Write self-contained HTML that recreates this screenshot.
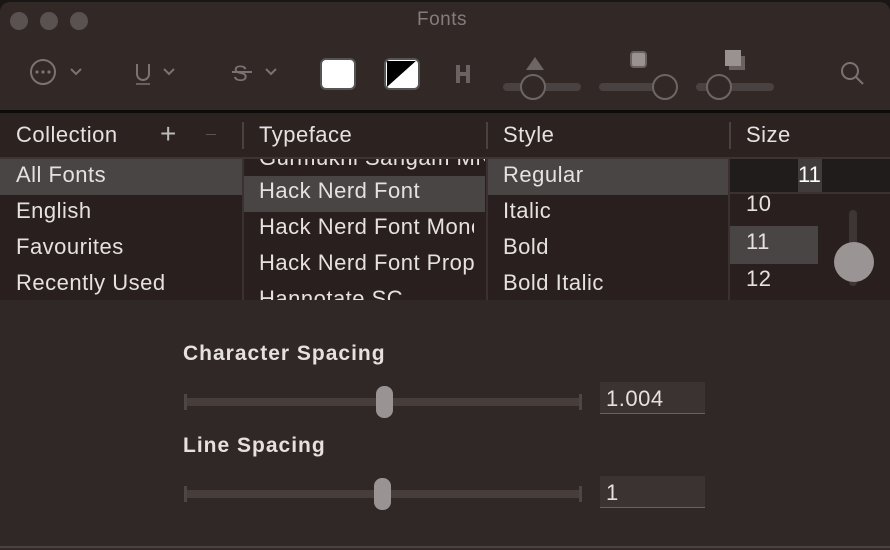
<!DOCTYPE html><html><head><style>
*{margin:0;padding:0;box-sizing:border-box}
body{width:890px;height:550px;background:#1a1616;font-family:"Liberation Sans",sans-serif;overflow:hidden;position:relative;color:#e6e1e0}
.a{position:absolute}
.t{font-size:22px;letter-spacing:0.5px;white-space:nowrap}
.b{font-weight:bold;font-size:21px;letter-spacing:1px}
</style></head><body>
<div class="a" style="left:0;top:2px;width:890px;height:548px;background:#322927;border-radius:10px 10px 0 0;overflow:hidden">
<div class="a" style="left:10px;top:10px;width:18px;height:18px;border-radius:50%;background:#5a5250"></div>
<div class="a" style="left:40px;top:10px;width:18px;height:18px;border-radius:50%;background:#5a5250"></div>
<div class="a" style="left:70px;top:10px;width:18px;height:18px;border-radius:50%;background:#5a5250"></div>
<div class="a t" style="left:417px;top:7px;color:#857d7b;font-size:19px">Fonts</div>
<svg class="a" style="left:0;top:0" width="890" height="110">
<g stroke="#7b7371" fill="none" stroke-width="2">
<circle cx="43" cy="70" r="12"/><path d="M71 67l5 5 5-5M164 67l5 5 5-5M266 67l5 5 5-5"/>
<path d="M137 62v10a6 6 0 0012 0v-10"/><path d="M136 82h14" stroke-width="1.5"/>
<path d="M232 70h20"/>
</g>
<g fill="#7b7371"><circle cx="37" cy="70" r="1.6"/><circle cx="43" cy="70" r="1.6"/><circle cx="49" cy="70" r="1.6"/></g>
<text x="233" y="79" font-size="22" fill="#7b7371" font-family="Liberation Sans">S</text>
<rect x="321" y="57" width="34" height="30" rx="5" fill="#fff" stroke="#555" stroke-width="2"/>
<rect x="385" y="57" width="34" height="30" rx="5" fill="#fff" stroke="#555" stroke-width="2"/>
<path d="M387 59h29L387 85z" fill="#000"/><path d="M416 59v26H387z" fill="#fff"/>
<g fill="#6b6361"><rect x="456" y="63" width="4" height="18"/><rect x="466" y="63" width="4" height="18"/><rect x="456" y="70" width="14" height="4"/></g>
<g stroke="#4a4240" stroke-width="8" stroke-linecap="round"><path d="M507 85h70M603 85h70M700 85h70"/></g>
<g stroke="#6e6664" stroke-width="2" fill="#322927"><circle cx="533" cy="85" r="12"/><circle cx="665" cy="85" r="12"/><circle cx="719" cy="85" r="12"/></g>
<path d="M535 55l9 13h-18z" fill="#6e6664"/>
<rect x="631" y="50" width="15" height="15" rx="3" fill="#9a9291" stroke="#6a6260" stroke-width="2"/>
<rect x="729" y="54" width="16" height="14" fill="#6a6260"/><rect x="725" y="48" width="16" height="16" fill="#9a9291"/>
<circle cx="850" cy="69" r="8" stroke="#7b7371" stroke-width="2" fill="none"/><path d="M856 75l7 7" stroke="#7b7371" stroke-width="2"/>
</svg>
<div class="a" style="left:0;top:108px;width:890px;height:3px;background:#0e0b0b"></div>
<div class="a" style="left:0;top:111px;width:890px;height:45px;background:#2c2321"></div>
<div class="a t" style="left:16px;top:120px">Collection</div>
<div class="a t" style="left:160px;top:116px;font-size:28px;color:#bbb;font-weight:300">+</div>
<div class="a" style="left:206px;top:132px;width:10px;height:1px;background:#555"></div>
<div class="a t" style="left:259px;top:120px">Typeface</div>
<div class="a t" style="left:503px;top:120px">Style</div>
<div class="a t" style="left:746px;top:120px">Size</div>
<div class="a" style="left:242px;top:120px;width:2px;height:27px;background:#4a4240"></div>
<div class="a" style="left:486px;top:120px;width:2px;height:27px;background:#4a4240"></div>
<div class="a" style="left:729px;top:120px;width:2px;height:27px;background:#4a4240"></div>
<div class="a" style="left:0;top:155px;width:890px;height:2px;background:#3e3533"></div>
<div class="a" style="left:0;top:157px;width:890px;height:143px;background:#281f1e"></div>
<div class="a" style="left:0;top:157px;width:242px;height:36px;background:#484544"></div>
<div class="a" style="left:242px;top:157px;width:2px;height:143px;background:#3a3130"></div>
<div class="a" style="left:486px;top:157px;width:2px;height:143px;background:#3a3130"></div>
<div class="a" style="left:728px;top:157px;width:2px;height:143px;background:#3a3130"></div>
<div class="a t" style="left:16px;top:160px">All Fonts</div>
<div class="a t" style="left:16px;top:196px">English</div>
<div class="a t" style="left:16px;top:232px">Favourites</div>
<div class="a t" style="left:16px;top:268px">Recently Used</div>
<div class="a" style="left:244px;top:157px;width:241px;height:143px;overflow:hidden">
<div class="a t" style="left:15px;top:-14px">Gurmukhi Sangam MN</div>
<div class="a" style="left:0;top:17px;width:241px;height:36px;background:#484544"></div>
<div class="a t" style="left:15px;top:19px">Hack Nerd Font</div>
<div class="a t" style="left:15px;top:55px;width:215px;overflow:hidden">Hack Nerd Font Mono</div>
<div class="a t" style="left:15px;top:91px;width:215px;overflow:hidden">Hack Nerd Font Propo</div>
<div class="a t" style="left:15px;top:127px">Hannotate SC</div>
</div>
<div class="a" style="left:488px;top:157px;width:240px;height:36px;background:#484544"></div>
<div class="a t" style="left:503px;top:160px">Regular</div>
<div class="a t" style="left:503px;top:196px">Italic</div>
<div class="a t" style="left:503px;top:232px">Bold</div>
<div class="a t" style="left:503px;top:268px">Bold Italic</div>
<div class="a" style="left:730px;top:157px;width:160px;height:33px;background:#1f1c1b"></div>
<div class="a" style="left:798px;top:157px;width:24px;height:33px;background:#3f3c3b"></div>
<div class="a t" style="left:798px;top:160px;color:#fff;font-size:22px;letter-spacing:0">11</div>
<div class="a" style="left:730px;top:190px;width:160px;height:2px;background:#3a3130"></div>
<div class="a t" style="left:746px;top:189px">10</div>
<div class="a" style="left:730px;top:224px;width:88px;height:38px;background:#484544"></div>
<div class="a t" style="left:746px;top:227px">11</div>
<div class="a t" style="left:746px;top:264px">12</div>
<div class="a" style="left:849px;top:208px;width:8px;height:76px;border-radius:4px;background:#3e3634"></div>
<div class="a" style="left:834px;top:240px;width:40px;height:40px;border-radius:50%;background:#9b9494"></div>
<div class="a" style="left:0;top:298px;width:890px;height:248px;background:#302826;border-bottom:2px solid #4a4240"></div>
<div class="a t b" style="left:183px;top:340px">Character Spacing</div>
<div class="a t b" style="left:183px;top:432px">Line Spacing</div>
<div class="a" style="left:185px;top:396px;width:396px;height:8px;background:#473e3c"></div>
<div class="a" style="left:184px;top:392px;width:3px;height:16px;background:#4f4644"></div>
<div class="a" style="left:579px;top:392px;width:3px;height:16px;background:#4f4644"></div>
<div class="a" style="left:376px;top:384px;width:17px;height:32px;border-radius:8px;background:#9a9393"></div>
<div class="a" style="left:185px;top:488px;width:396px;height:8px;background:#473e3c"></div>
<div class="a" style="left:184px;top:484px;width:3px;height:16px;background:#4f4644"></div>
<div class="a" style="left:579px;top:484px;width:3px;height:16px;background:#4f4644"></div>
<div class="a" style="left:374px;top:476px;width:17px;height:32px;border-radius:8px;background:#9a9393"></div>
<div class="a" style="left:600px;top:380px;width:105px;height:32px;background:#3b3331;border-bottom:1px solid #6a6260"></div>
<div class="a t" style="left:606px;top:384px">1.004</div>
<div class="a" style="left:600px;top:474px;width:105px;height:32px;background:#3b3331;border-bottom:1px solid #6a6260"></div>
<div class="a t" style="left:606px;top:478px">1</div>
</div>
</body></html>
